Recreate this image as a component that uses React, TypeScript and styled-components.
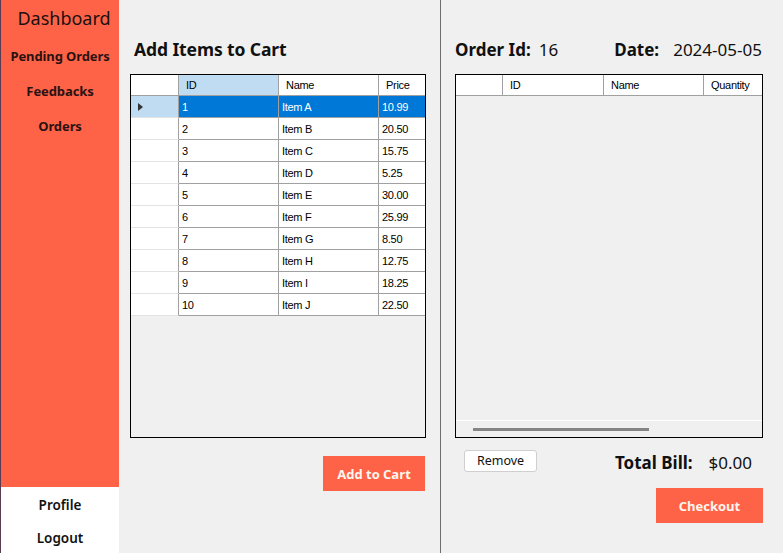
import React from "react";
import styled, { createGlobalStyle } from "styled-components";

const Global = createGlobalStyle`
  html, body { margin: 0; padding: 0; background: #f0f0f0; }
  * { box-sizing: border-box; }
`;

const Frame = styled.div`
  width: 783px;
  height: 553px;
  display: flex;
  background: #f0f0f0;
  overflow: hidden;
  font-family: "Noto Sans", "Open Sans", sans-serif;
`;

const Sidebar = styled.nav`
  width: 119px;
  display: flex;
  flex-direction: column;
  border-left: 1px solid #5a3b52;
`;

const SideTop = styled.div`
  flex: 1;
  background: #ff6347;
  display: flex;
  flex-direction: column;
  align-items: center;
  padding-top: 6px;
`;

const SideTitle = styled.div`
  font-size: 18px;
  color: #1a1010;
  line-height: 24px;
  margin-bottom: 17px;
  margin-left: 8px;
`;

const SideLink = styled.div`
  font-size: 13px;
  font-weight: 700;
  color: #2a1212;
  line-height: 19px;
  height: 35px;
  letter-spacing: -0.1px;
`;

const SideBottom = styled.div`
  height: 66px;
  flex-shrink: 0;
  background: #ffffff;
  display: flex;
  flex-direction: column;
  align-items: center;
  gap: 14px;
  padding-top: 9px;
`;

const BottomLink = styled.div`
  font-size: 13.5px;
  font-weight: 600;
  color: #111;
  line-height: 19px;
`;

const LeftPanel = styled.section`
  width: 321px;
  padding: 36px 0 0 11px;
  display: flex;
  flex-direction: column;
`;

const Divider = styled.div`
  width: 1px;
  background: #6e6e6e;
  align-self: stretch;
`;

const RightPanel = styled.section`
  flex: 1;
  padding: 38px 0 0 14px;
  display: flex;
  flex-direction: column;
`;

const Title = styled.h2`
  margin: 0 0 12px 4px;
  font-size: 17.5px;
  font-weight: 700;
  line-height: 26px;
  color: #111;
  letter-spacing: -0.1px;
`;

const Grid = styled.div<{ $w: number; $cols: string }>`
  width: ${(p) => p.$w}px;
  height: 364px;
  border: 1px solid #000;
  background: #f0f0f0;
  display: flex;
  flex-direction: column;
  font-family: "Liberation Sans", Arial, sans-serif;
  font-size: 11px;
  letter-spacing: -0.3px;
  color: #000;
  --cols: ${(p) => p.$cols};
`;

const Row = styled.div`
  display: grid;
  grid-template-columns: var(--cols);
`;

const HeadCell = styled.div<{ $active?: boolean; $first?: boolean }>`
  height: 21px;
  line-height: 21px;
  padding-left: ${(p) => (p.$first ? 0 : 7)}px;
  background: ${(p) => (p.$active ? "#bfdcf3" : "#ffffff")};
  border-right: 1px solid #a0a0a0;
  border-bottom: 1px solid #a0a0a0;
  white-space: nowrap;
  overflow: hidden;
  &:last-child { border-right: none; }
`;

const RowHead = styled.div<{ $sel?: boolean }>`
  height: 22px;
  background: ${(p) => (p.$sel ? "#bfdcf3" : "#ffffff")};
  border-right: 1px solid #a0a0a0;
  border-bottom: 1px solid #e3e3e3;
  display: flex;
  align-items: center;
  padding-left: 7px;
`;

const Arrow = styled.span`
  width: 0;
  height: 0;
  border-top: 4px solid transparent;
  border-bottom: 4px solid transparent;
  border-left: 5px solid #333;
`;

const Cell = styled.div<{ $sel?: boolean }>`
  height: 22px;
  line-height: 22px;
  padding-left: 3px;
  background: ${(p) => (p.$sel ? "#0078d7" : "#ffffff")};
  color: ${(p) => (p.$sel ? "#ffffff" : "#000")};
  border-right: 1px solid #a0a0a0;
  border-bottom: 1px solid #a0a0a0;
  white-space: nowrap;
  overflow: hidden;
  &:last-child { border-right: none; }
`;

const Spacer = styled.div`
  flex: 1;
`;

const HScroll = styled.div`
  height: 17px;
  border-top: 1px solid #ffffff;
  background: #f0f0f0;
  padding: 7px 0 0 17px;
`;

const Thumb = styled.div`
  width: 176px;
  height: 3px;
  background: #858585;
`;

const ActionRow = styled.div<{ $w: number }>`
  width: ${(p) => p.$w}px;
  display: flex;
  justify-content: flex-end;
  margin-top: 18px;
`;

const PrimaryButton = styled.button<{ $w: number }>`
  width: ${(p) => p.$w}px;
  height: 35px;
  border: none;
  background: #ff6347;
  color: #fff6ef;
  font-family: "Open Sans", "Noto Sans", sans-serif;
  font-size: 13px;
  font-weight: 700;
  padding: 0;
  cursor: pointer;
`;

const InfoRow = styled.div`
  display: flex;
  align-items: baseline;
  height: 26px;
  margin: 0 0 10px 0;
  color: #111;
`;

const Label = styled.span<{ $ml?: number }>`
  font-size: 17px;
  font-weight: 700;
  margin-left: ${(p) => p.$ml ?? 0}px;
`;

const Value = styled.span<{ $ml?: number }>`
  font-size: 17px;
  font-weight: 400;
  margin-left: ${(p) => p.$ml ?? 0}px;
`;

const BillRow = styled.div`
  width: 308px;
  display: flex;
  align-items: center;
  margin-top: 11px;
  padding-left: 9px;
`;

const SmallButton = styled.button`
  width: 73px;
  height: 22px;
  border: 1px solid #cfcfcf;
  border-radius: 3px;
  background: #ffffff;
  font-family: "Noto Sans", sans-serif;
  font-size: 12.5px;
  color: #111;
  padding: 0;
  line-height: 20px;
`;

const BillLabel = styled.span`
  font-size: 17px;
  font-weight: 700;
  color: #111;
  margin-left: 78px;
  position: relative;
  top: 2px;
`;

const BillValue = styled.span`
  font-size: 17px;
  color: #111;
  margin-left: 16px;
  position: relative;
  top: 2px;
`;

const CheckoutRow = styled.div`
  width: 308px;
  display: flex;
  justify-content: flex-end;
  margin-top: 16px;
`;

const items = [
  ["1", "Item A", "10.99"],
  ["2", "Item B", "20.50"],
  ["3", "Item C", "15.75"],
  ["4", "Item D", "5.25"],
  ["5", "Item E", "30.00"],
  ["6", "Item F", "25.99"],
  ["7", "Item G", "8.50"],
  ["8", "Item H", "12.75"],
  ["9", "Item I", "18.25"],
  ["10", "Item J", "22.50"],
];

export default function App() {
  return (
    <>
      <Global />
      <Frame>
        <Sidebar>
          <SideTop>
            <SideTitle>Dashboard</SideTitle>
            <SideLink>Pending Orders</SideLink>
            <SideLink>Feedbacks</SideLink>
            <SideLink>Orders</SideLink>
          </SideTop>
          <SideBottom>
            <BottomLink>Profile</BottomLink>
            <BottomLink>Logout</BottomLink>
          </SideBottom>
        </Sidebar>

        <LeftPanel>
          <Title>Add Items to Cart</Title>
          <Grid $w={296} $cols="48px 100px 100px 1fr">
            <Row>
              <HeadCell $first />
              <HeadCell $active>ID</HeadCell>
              <HeadCell>Name</HeadCell>
              <HeadCell>Price</HeadCell>
            </Row>
            {items.map((it, i) => (
              <Row key={it[0]}>
                <RowHead $sel={i === 0}>{i === 0 && <Arrow />}</RowHead>
                {it.map((v, j) => (
                  <Cell key={j} $sel={i === 0}>
                    {v}
                  </Cell>
                ))}
              </Row>
            ))}
            <Spacer />
          </Grid>
          <ActionRow $w={295}>
            <PrimaryButton $w={102}>Add to Cart</PrimaryButton>
          </ActionRow>
        </LeftPanel>

        <Divider />

        <RightPanel>
          <InfoRow>
            <Label>Order Id:</Label>
            <Value $ml={8}>16</Value>
            <Label $ml={56}>Date:</Label>
            <Value $ml={14}>2024-05-05</Value>
          </InfoRow>
          <Grid $w={308} $cols="47px 101px 100px 1fr">
            <Row>
              <HeadCell $first />
              <HeadCell>ID</HeadCell>
              <HeadCell>Name</HeadCell>
              <HeadCell>Quantity</HeadCell>
            </Row>
            <Spacer />
            <HScroll>
              <Thumb />
            </HScroll>
          </Grid>
          <BillRow>
            <SmallButton>Remove</SmallButton>
            <BillLabel>Total Bill:</BillLabel>
            <BillValue>$0.00</BillValue>
          </BillRow>
          <CheckoutRow>
            <PrimaryButton $w={107}>Checkout</PrimaryButton>
          </CheckoutRow>
        </RightPanel>
      </Frame>
    </>
  );
}
